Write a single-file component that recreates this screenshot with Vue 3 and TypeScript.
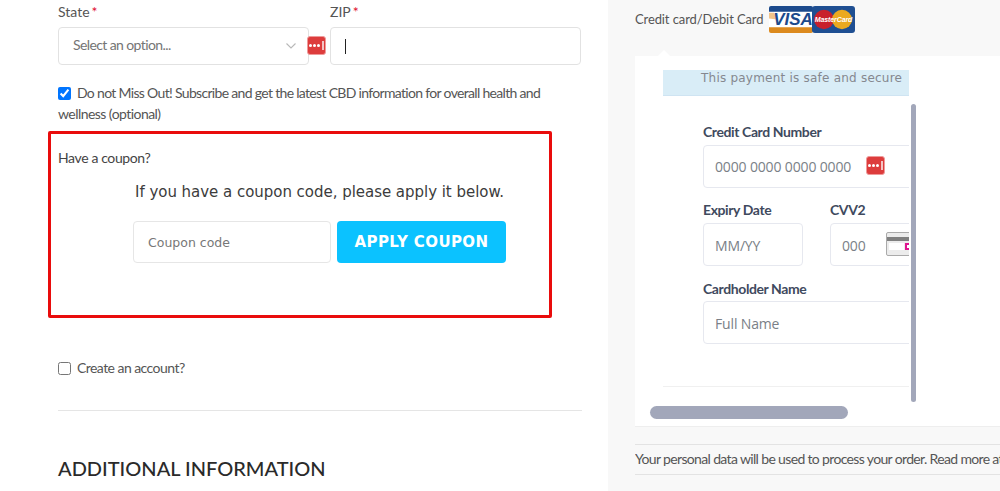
<script setup lang="ts">
const pwDots = [0, 1, 2]
</script>

<template>
  <div class="page">
    <main class="left">
      <div class="address-row">
        <div class="field state">
          <label>State<b>*</b></label>
          <div class="box select">
            <span class="select-text">Select an option...</span>
            <svg class="chev" width="10" height="6" viewBox="0 0 10 6"><path d="M.5.5 5 5 9.5.5" fill="none" stroke="#b8b8b8" stroke-width="1.1" /></svg>
            <span class="pw-icon">
              <i v-for="d in pwDots" :key="d"></i><em></em>
            </span>
          </div>
        </div>
        <div class="field zip">
          <label>ZIP<b>*</b></label>
          <div class="box"><span class="caret"></span></div>
        </div>
      </div>

      <label class="check subscribe">
        <input type="checkbox" checked />
        <span class="sub-first">Do not Miss Out! Subscribe and get the latest CBD information for overall health and</span>
        <span class="sub-second">wellness (optional)</span>
      </label>

      <section class="coupon">
        <p class="have">Have a coupon?</p>
        <div class="coupon-body">
          <p class="intro">If you have a coupon code, please apply it below.</p>
          <div class="coupon-row">
            <div class="coupon-input">Coupon code</div>
            <button type="button">APPLY COUPON</button>
          </div>
        </div>
      </section>

      <label class="check account">
        <input type="checkbox" />
        <span>Create an account?</span>
      </label>
      <hr />
      <h2>ADDITIONAL INFORMATION</h2>
    </main>

    <aside class="right">
      <div class="method">
        <span>Credit card/Debit Card</span>
        <svg class="logos" width="86" height="27" viewBox="0 0 86 28" preserveAspectRatio="none">
          <rect x="0" y="0" width="44" height="28" rx="2" fill="#fff" />
          <path d="M2 0h40a2 2 0 0 1 2 2v4H0V2a2 2 0 0 1 2-2Z" fill="#1c4a8c" />
          <path d="M0 22h44v4a2 2 0 0 1-2 2H2a2 2 0 0 1-2-2Z" fill="#dc8a1e" />
          <path d="M0 7h5l3 7-8-1Z" fill="#f2c48a" />
          <text x="24" y="20" class="visa">VISA</text>
          <rect x="43" y="0" width="43" height="28" rx="3" fill="#1f4f92" />
          <circle cx="55" cy="14" r="10" fill="#c8202c" />
          <circle cx="73" cy="14" r="10" fill="#eba91f" />
          <text x="64.500" y="16.500" class="mc">MasterCard</text>
        </svg>
      </div>

      <div class="panel">
        <span class="notch"></span>
        <div class="viewport">
          <div class="notice">This payment is safe and secure</div>
          <div class="card-form">
            <div class="cf-field">
              <label>Credit Card Number</label>
              <div class="cf-box number">
                <span>0000 0000 0000 0000</span>
                <span class="pw-icon card-pw">
                  <i v-for="d in pwDots" :key="d"></i><em></em>
                </span>
              </div>
            </div>
            <div class="cf-row">
              <div class="cf-field expiry">
                <label>Expiry Date</label>
                <div class="cf-box low">MM/YY</div>
              </div>
              <div class="cf-field cvv">
                <label>CVV2</label>
                <div class="cf-box low">
                  <span>000</span>
                  <span class="cvv-card">
                    <span class="stripe"></span>
                    <span class="sig"></span>
                    <span class="code"></span>
                  </span>
                </div>
              </div>
            </div>
            <div class="cf-field name">
              <label>Cardholder Name</label>
              <div class="cf-box low">Full Name</div>
            </div>
          </div>
          <div class="rule"></div>
        </div>
        <span class="scroll-v"></span>
        <span class="scroll-h"></span>
      </div>

      <div class="privacy">Your personal data will be used to process your order. Read more at</div>
    </aside>
  </div>
</template>

<style>
html, body { margin: 0; overflow: hidden; background: #fff; }
</style>

<style scoped>
* { box-sizing: border-box; }
.page {
  display: flex;
  width: 1000px;
  height: 491px;
  overflow: hidden;
  font-family: Lato, "Liberation Sans", sans-serif;
  color: #4a4a4a;
}
.left {
  width: 608px;
  flex: none;
  padding: 0 26px 0 58px;
}
.address-row { display: flex; gap: 21px; }
.field label {
  display: block;
  height: 27px;
  padding-top: 3px;
  font-size: 14px;
  line-height: 17px;
  color: #555;
}
.field b { margin-left: 2px; color: #e01030; font-weight: 400; }
.state { width: 251px; }
.zip { width: 251px; }
.box {
  position: relative;
  height: 38px;
  background: #fff;
  border: 1px solid #e2e2e2;
  border-radius: 4px;
}
.select {
  display: flex;
  align-items: center;
  padding: 0 0 3px 14px;
  font-size: 14px;
  letter-spacing: -0.6px;
  color: #757575;
}
.chev { position: absolute; right: 12px; top: 15px; }
.pw-icon {
  position: absolute;
  right: -18px;
  top: 8px;
  display: flex;
  align-items: center;
  gap: 1px;
  width: 19px;
  height: 19px;
  padding-left: 1px;
  background: #dd3c3c;
  border: 1px solid #ef9a9a;
  border-radius: 3px;
}
.pw-icon i { width: 3px; height: 3px; background: #fff; border-radius: 50%; }
.pw-icon em { width: 2px; height: 9px; margin-left: 1px; background: #f3c4c4; }
.caret {
  display: block;
  position: absolute;
  left: 14px;
  top: 11px;
  width: 1px;
  height: 15px;
  background: #222;
}
.check {
  display: block;
  font-size: 14px;
  line-height: 21px;
  letter-spacing: -0.68px;
  color: #555;
}
.check input {
  width: 13px;
  height: 13px;
  margin: 0 6px 0 0;
  vertical-align: -2px;
  accent-color: #0075ff;
}
.subscribe { margin-top: 17px; }
.subscribe .sub-first { white-space: nowrap; }
.subscribe .sub-second { display: block; letter-spacing: -0.55px; }
.coupon {
  position: relative;
  width: 504px;
  height: 187px;
  margin: 7px 0 0 -10px;
  padding: 15px 7px 0;
  border: 3px solid #e90c0c;
  border-radius: 2px;
}
.have { margin: 0; font-size: 14px; line-height: 17px; color: #444; letter-spacing: -0.38px; }
.coupon-body { margin-left: 75px; }
.intro {
  margin: 16px 0 0 2px;
  font-family: "DejaVu Sans", sans-serif;
  font-size: 15px;
  line-height: 20px;
  letter-spacing: -0.03px;
  color: #3c3c3c;
  white-space: nowrap;
}
.coupon-row { display: flex; gap: 6px; margin-top: 19px; }
.coupon-input {
  width: 198px;
  height: 42px;
  padding-left: 14px;
  font-family: "DejaVu Sans", sans-serif;
  font-size: 12.500px;
  line-height: 41px;
  color: #777;
  border: 1px solid #e6e6e6;
  border-radius: 4px;
}
button {
  width: 169px;
  height: 42px;
  padding: 0;
  font-family: "DejaVu Sans", sans-serif;
  font-size: 15px;
  font-weight: 700;
  letter-spacing: 0.4px;
  color: #fff;
  background: #0bc2ff;
  border: 0;
  border-radius: 4px;
}
.account { margin-top: 39px; letter-spacing: -0.55px; }
hr { margin: 32px 0 0; border: 0; border-top: 1px solid #e5e5e5; }
h2 {
  margin: 45px 0 0;
  font-size: 20px;
  line-height: 25px;
  font-weight: 500;
  color: #2a2a2a;
  white-space: nowrap;
}

.right {
  flex: 1;
  min-width: 0;
  padding-left: 27px;
  background: #f8f8f8;
}
.method {
  display: flex;
  align-items: flex-start;
  gap: 6px;
  height: 56px;
  padding-top: 6px;
  font-size: 13px;
  letter-spacing: -0.1px;
  color: #555;
}
.method span { margin-top: 5px; }
.logos { flex: none; }
.visa { font: italic 700 17px "Liberation Sans", sans-serif; fill: #1c4a8c; text-anchor: middle; }
.mc { font: italic 700 7px "Liberation Sans", sans-serif; fill: #fff; text-anchor: middle; }
.panel {
  position: relative;
  height: 371px;
  background: #fff;
  border-bottom: 1px solid #eee;
}
.notch {
  position: absolute;
  left: 23px;
  top: -6px;
  border-left: 6px solid transparent;
  border-right: 6px solid transparent;
  border-bottom: 6px solid #fff;
}
.viewport {
  position: relative;
  width: 274px;
  height: 331px;
  padding-left: 28px;
  overflow: hidden;
}
.notice {
  width: 246px;
  height: 40px;
  padding: 14px 0 0 38px;
  font-family: "DejaVu Sans", sans-serif;
  font-size: 12px;
  letter-spacing: 0.22px;
  line-height: 17px;
  color: #85888f;
  white-space: nowrap;
  background: linear-gradient(#fff 14px, #d9edf7 14px);
  border-bottom: 1px solid #cfe4f2;
}
.card-form { width: 320px; padding: 27px 0 0 40px; }
.cf-field label {
  display: block;
  height: 22px;
  font-size: 14px;
  font-weight: 700;
  line-height: 17px;
  letter-spacing: -0.4px;
  color: #3f4a5e;
}
.cf-box {
  display: flex;
  align-items: center;
  position: relative;
  height: 43px;
  padding-left: 11px;
  font-family: "Open Sans", sans-serif;
  font-size: 14px;
  color: #7a7f87;
  letter-spacing: -0.15px;
  background: #fff;
  border: 1px solid #e6e8ef;
  border-radius: 4px;
}
.low { padding-top: 2px; }
.number { width: 260px; }
.card-pw { right: auto; left: 162px; top: 10px; }
.cf-row { display: flex; gap: 27px; margin-top: 13px; }
.expiry { width: 100px; flex: none; }
.cvv { width: 160px; flex: none; }
.cvv-card {
  position: absolute;
  left: 55px;
  top: 8px;
  width: 44px;
  height: 24px;
  background: #ececec;
  border: 1px solid #aaa;
  border-radius: 2px;
}
.stripe { position: absolute; left: 0; right: 0; top: 4px; height: 4px; background: #808080; }
.sig { position: absolute; left: 2px; top: 10px; width: 15px; height: 7px; background: #fff; }
.code { position: absolute; left: 18px; top: 10px; width: 7px; height: 7px; border: 2px solid #e0158f; background: #fff; }
.name { width: 260px; margin-top: 14px; }
.name label { height: 21px; }
.rule {
  position: absolute;
  left: 28px;
  top: 330px;
  width: 246px;
  border-top: 1px solid #f0f0f0;
}
.scroll-v {
  position: absolute;
  left: 276px;
  top: 48px;
  width: 5px;
  height: 298px;
  background: #a2a7ba;
  border-radius: 3px;
}
.scroll-h {
  position: absolute;
  left: 15px;
  top: 350px;
  width: 198px;
  height: 13px;
  background: #a2a7ba;
  border-radius: 7px;
}
.privacy {
  margin-top: 17px;
  height: 31px;
  font-size: 14px;
  line-height: 27px;
  letter-spacing: -0.65px;
  color: #555;
  white-space: nowrap;
  overflow: hidden;
  border-top: 1px solid #e3e3e3;
  border-bottom: 1px solid #e3e3e3;
}
</style>
